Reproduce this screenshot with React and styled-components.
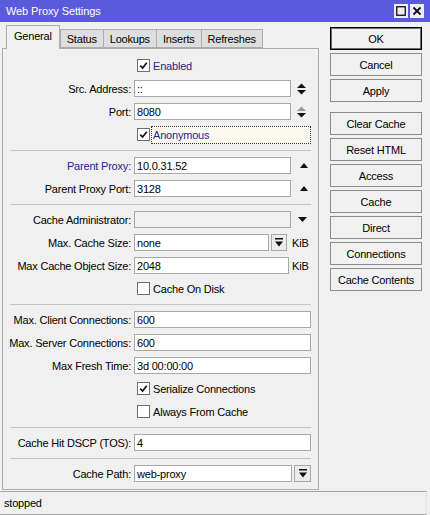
import React from 'react';
import styled, { createGlobalStyle } from 'styled-components';

const Global = createGlobalStyle`
  html, body { margin: 0; padding: 0; background: #f0f0f0; }
  body { font-family: "Liberation Sans", Arial, sans-serif; font-size: 11px; letter-spacing: -0.2px; color: #000; }
  * { box-sizing: border-box; }
`;

const Window = styled.div`
  width: 430px;
  height: 515px;
  display: flex;
  flex-direction: column;
  background: #f0f0f0;
  overflow: hidden;
`;

const TitleBar = styled.div`
  height: 22px;
  flex-shrink: 0;
  background: #5a5adc;
  color: #fff;
  font-size: 11px;
  letter-spacing: -0.1px;
  display: flex;
  align-items: center;
  justify-content: space-between;
  padding: 0 6px 0 6px;
`;

const TitleButtons = styled.div`
  display: flex;
  gap: 2px;
`;

const TitleBtn = styled.div`
  width: 14px;
  height: 14px;
  background: #ececf2;
  display: flex;
  align-items: center;
  justify-content: center;
`;

const Body = styled.div`
  flex: 1;
  display: flex;
  padding: 3px 8px 1px 2px;
  gap: 11px;
  min-height: 0;
`;

const LeftArea = styled.div`
  width: 317px;
  display: flex;
  flex-direction: column;
`;

const TabBar = styled.div`
  height: 23px;
  display: flex;
  align-items: flex-end;
  padding-left: 4px;
`;

const Tab = styled.div`
  height: ${p => (p.$active ? '24px' : '19px')};
  margin-bottom: ${p => (p.$active ? '-1px' : '0')};
  padding: ${p => (p.$active ? '0 7px 3px' : '0 6px')};
  background: ${p => (p.$active ? '#f0f0f0' : '#dedede')};
  border: 1px solid #adadad;
  border-bottom: ${p => (p.$active ? 'none' : '1px solid #adadad')};
  border-left: ${p => (p.$active || p.$first ? '1px solid #adadad' : 'none')};
  position: relative;
  z-index: ${p => (p.$active ? 1 : 0)};
  display: flex;
  align-items: center;
  white-space: nowrap;
`;

const Panel = styled.div`
  flex: 1;
  border: 1px solid #adadad;
  padding: 5px 7px 3px 6px;
  display: flex;
  flex-direction: column;
`;

const Row = styled.div`
  height: 23px;
  display: flex;
  align-items: center;
  flex-shrink: 0;
`;

const Label = styled.div`
  width: 122px;
  margin-right: 3px;
  flex-shrink: 0;
  display: flex;
  justify-content: flex-end;
  white-space: nowrap;
  color: ${p => (p.$accent ? '#1f1f8f' : '#000')};
`;

const Field = styled.div`
  flex: 1;
  display: flex;
  align-items: center;
  gap: ${p => p.$gap || 0}px;
  padding-left: ${p => p.$indent || 0}px;
  min-width: 0;
`;

const Input = styled.div`
  flex: 1;
  height: 17px;
  border: 1px solid #a8a8a8;
  background: ${p => (p.$disabled ? '#f0f0f0' : '#fff')};
  padding: 0 2px;
  display: flex;
  align-items: center;
  white-space: nowrap;
  overflow: hidden;
  min-width: 0;
`;

const IconSlot = styled.div`
  width: 20px;
  flex-shrink: 0;
  display: flex;
  justify-content: center;
  padding-left: ${p => p.$shift || 0}px;
`;

const SmallButton = styled.div`
  width: ${p => p.$w || 16}px;
  height: 17px;
  flex-shrink: 0;
  border: 1px solid #a8a8a8;
  background: #ececec;
  display: flex;
  align-items: center;
  justify-content: center;
`;

const Unit = styled.div`
  width: 22px;
  flex-shrink: 0;
  padding-left: 3px;
`;

const Box = styled.div`
  width: 13px;
  height: 13px;
  flex-shrink: 0;
  border: 1px solid #6e6e6e;
  background: #fff;
  display: flex;
  align-items: center;
  justify-content: center;
`;

const CheckText = styled.div`
  color: ${p => (p.$accent ? '#1f1f8f' : '#000')};
  white-space: nowrap;
`;

const FocusBox = styled.div`
  flex: 1;
  height: 18px;
  border: 1px dotted #333;
  background: #fbf9ee;
  display: flex;
  align-items: center;
  padding-left: 1px;
  color: #1f1f8f;
`;

const Separator = styled.div`
  height: 8px;
  flex-shrink: 0;
  display: flex;
  flex-direction: column;
  padding: 4px 0 0 1px;
  &::before {
    content: '';
    display: block;
    height: 1px;
    background: #c4c4c4;
  }
`;

const ButtonColumn = styled.div`
  width: 92px;
  display: flex;
  flex-direction: column;
  gap: 3px;
  padding-top: 2px;
`;

const Button = styled.div`
  height: 23px;
  flex-shrink: 0;
  border: 1px solid ${p => (p.$default ? '#000' : '#8c8c8c')};
  box-shadow: ${p => (p.$default ? 'inset 0 0 0 1px #6a6a6a' : 'none')};
  background: #f1f1f1;
  display: flex;
  align-items: center;
  justify-content: center;
  margin-top: ${p => (p.$spaced ? '7px' : '0')};
  white-space: nowrap;
`;

const StatusBar = styled.div`
  height: 24px;
  flex-shrink: 0;
  width: 427px;
  border-top: 1px solid #a6a6a6;
  border-bottom: 1px solid #a6a6a6;
  border-right: 1px solid #e4e4e4;
  display: flex;
  align-items: center;
  padding-left: 4px;
`;

const Check = () => (
  <svg width="9" height="9" viewBox="0 0 9 9">
    <path d="M1.2 4.6 L3.6 7 L7.8 1.8" fill="none" stroke="#111" strokeWidth="1.7" />
  </svg>
);

const UpDown = ({ dimTop }) => (
  <svg width="9" height="12" viewBox="0 0 9 12">
    <polygon points="0,5 4.5,0.5 9,5" fill={dimTop ? '#9a9a9a' : '#111'} />
    <polygon points="0,7 4.5,11.5 9,7" fill="#111" />
  </svg>
);

const Up = () => (
  <svg width="8" height="5" viewBox="0 0 8 5">
    <polygon points="0,5 4,0 8,5" fill="#111" />
  </svg>
);

const Down = () => (
  <svg width="9" height="5" viewBox="0 0 9 5">
    <polygon points="0,0 9,0 4.5,5" fill="#111" />
  </svg>
);

const DownBar = () => (
  <svg width="8" height="9" viewBox="0 0 8 9">
    <rect x="0" y="0" width="8" height="1.5" fill="#111" />
    <polygon points="0,3.5 8,3.5 4,8.5" fill="#111" />
  </svg>
);

const CheckRow = ({ checked, text, accent, focus }) => (
  <Row>
    <Label />
    <Field $indent={3} $gap={focus ? 1 : 3}>
      <Box>{checked && <Check />}</Box>
      {focus ? <FocusBox>{text}</FocusBox> : <CheckText $accent={accent}>{text}</CheckText>}
    </Field>
  </Row>
);

const InputRow = ({ label, value, accent, disabled, children, gap }) => (
  <Row>
    <Label $accent={accent}>{label}</Label>
    <Field $gap={gap}>
      <Input $disabled={disabled}>{value}</Input>
      {children}
    </Field>
  </Row>
);

const tabs = ['General', 'Status', 'Lookups', 'Inserts', 'Refreshes'];
const buttons = [
  { t: 'OK', d: true },
  { t: 'Cancel' },
  { t: 'Apply' },
  { t: 'Clear Cache', s: true },
  { t: 'Reset HTML' },
  { t: 'Access' },
  { t: 'Cache' },
  { t: 'Direct' },
  { t: 'Connections' },
  { t: 'Cache Contents' },
];

export default function App() {
  return (
    <>
      <Global />
      <Window>
        <TitleBar>
          <span>Web Proxy Settings</span>
          <TitleButtons>
            <TitleBtn>
              <svg width="10" height="10" viewBox="0 0 10 10">
                <rect x="0.75" y="0.75" width="8.5" height="8.5" fill="none" stroke="#111" strokeWidth="1.3" />
              </svg>
            </TitleBtn>
            <TitleBtn>
              <svg width="10" height="10" viewBox="0 0 10 10">
                <path d="M1.5 1.5 L8.5 8.5 M8.5 1.5 L1.5 8.5" stroke="#111" strokeWidth="1.8" />
              </svg>
            </TitleBtn>
          </TitleButtons>
        </TitleBar>
        <Body>
          <LeftArea>
            <TabBar>
              {tabs.map((t, i) => (
                <Tab key={t} $active={i === 0} $first={i === 1}>
                  {t}
                </Tab>
              ))}
            </TabBar>
            <Panel>
              <CheckRow checked text="Enabled" accent />
              <InputRow label="Src. Address:" value="::">
                <IconSlot><UpDown /></IconSlot>
              </InputRow>
              <InputRow label="Port:" value="8080">
                <IconSlot><UpDown dimTop /></IconSlot>
              </InputRow>
              <CheckRow checked text="Anonymous" focus />
              <Separator />
              <InputRow label="Parent Proxy:" value="10.0.31.52" accent>
                <IconSlot $shift={5}><Up /></IconSlot>
              </InputRow>
              <InputRow label="Parent Proxy Port:" value="3128">
                <IconSlot $shift={5}><Up /></IconSlot>
              </InputRow>
              <Separator />
              <InputRow label="Cache Administrator:" value="" disabled>
                <IconSlot $shift={2}><Down /></IconSlot>
              </InputRow>
              <InputRow label="Max. Cache Size:" value="none" gap={2}>
                <SmallButton><DownBar /></SmallButton>
                <Unit>KiB</Unit>
              </InputRow>
              <InputRow label="Max Cache Object Size:" value="2048">
                <Unit>KiB</Unit>
              </InputRow>
              <CheckRow text="Cache On Disk" />
              <Separator />
              <InputRow label="Max. Client Connections:" value="600" />
              <InputRow label="Max. Server Connections:" value="600" />
              <InputRow label="Max Fresh Time:" value="3d 00:00:00" />
              <CheckRow checked text="Serialize Connections" />
              <CheckRow text="Always From Cache" />
              <Separator />
              <InputRow label="Cache Hit DSCP (TOS):" value="4" />
              <Separator />
              <InputRow label="Cache Path:" value="web-proxy" gap={2}>
                <SmallButton $w={17}><DownBar /></SmallButton>
              </InputRow>
            </Panel>
          </LeftArea>
          <ButtonColumn>
            {buttons.map(b => (
              <Button key={b.t} $default={b.d} $spaced={b.s}>
                {b.t}
              </Button>
            ))}
          </ButtonColumn>
        </Body>
        <StatusBar>stopped</StatusBar>
      </Window>
    </>
  );
}
